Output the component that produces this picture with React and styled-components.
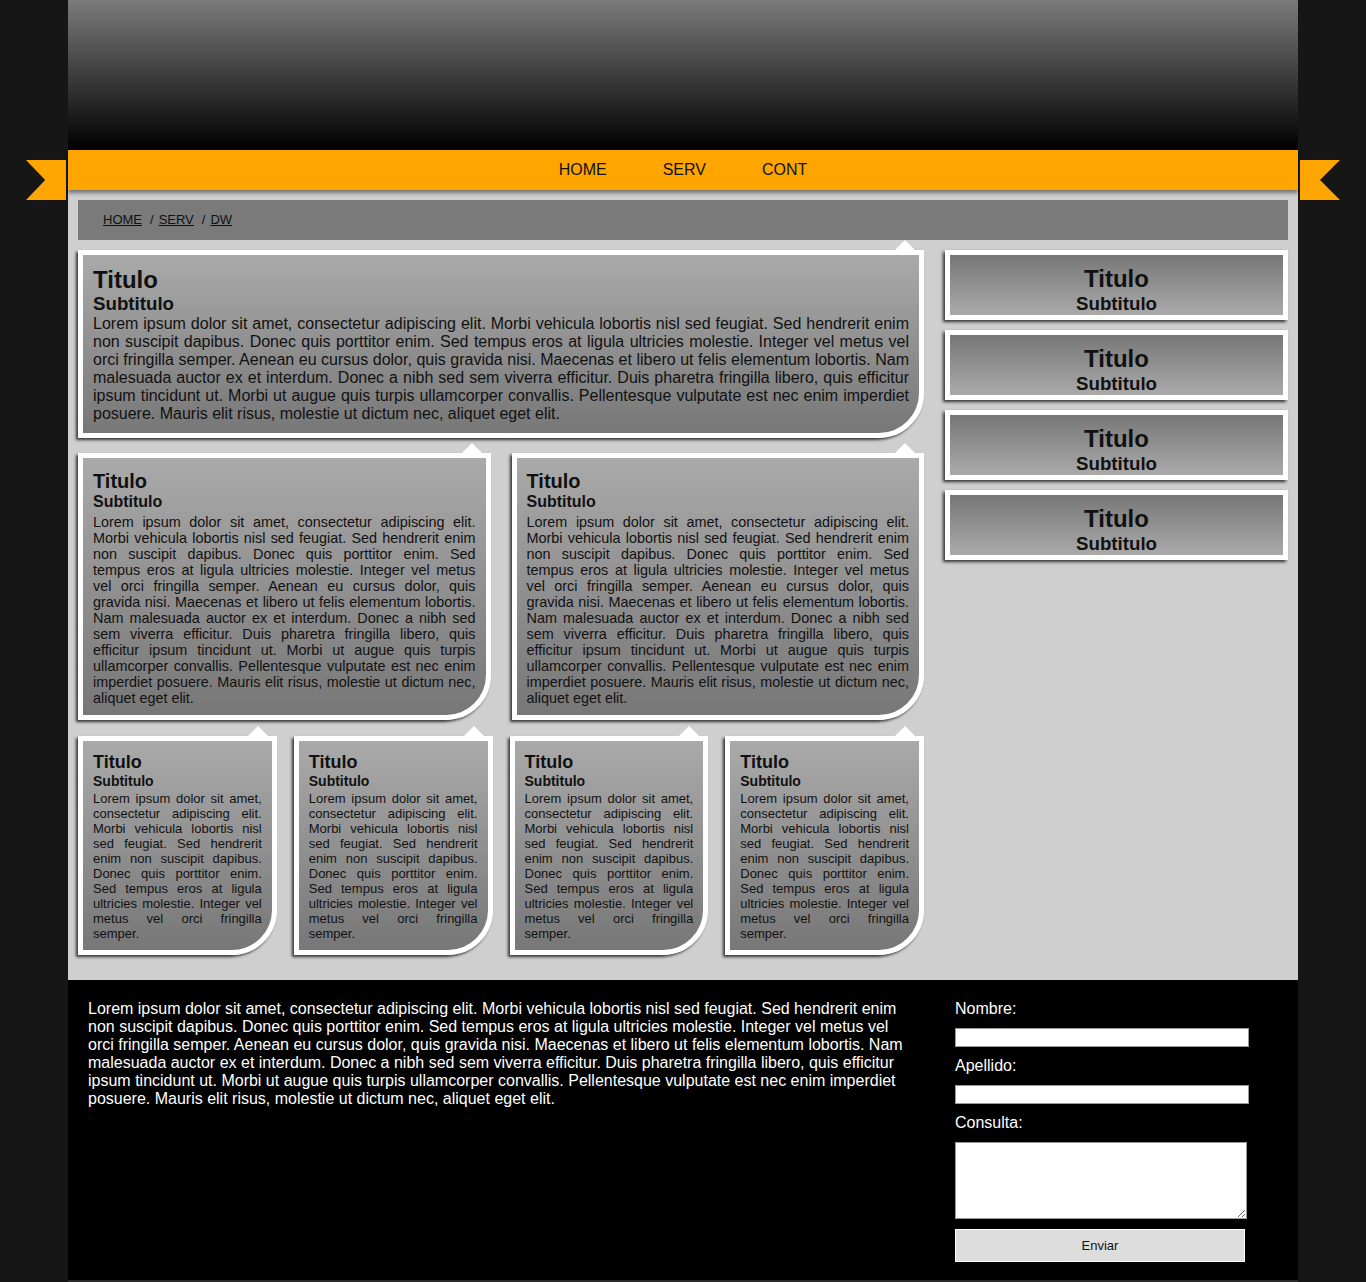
import React from 'react';
import styled, { createGlobalStyle } from 'styled-components';

const GlobalStyle = createGlobalStyle`
body{
margin:0;
background-color:#161616;
font-family:"Liberation Sans", Arial, sans-serif;
}
`;

const LOREM = 'Lorem ipsum dolor sit amet, consectetur adipiscing elit. Morbi vehicula lobortis nisl sed feugiat. Sed hendrerit enim non suscipit dapibus. Donec quis porttitor enim. Sed tempus eros at ligula ultricies molestie. Integer vel metus vel orci fringilla semper. Aenean eu cursus dolor, quis gravida nisi. Maecenas et libero ut felis elementum lobortis. Nam malesuada auctor ex et interdum. Donec a nibh sed sem viverra efficitur. Duis pharetra fringilla libero, quis efficitur ipsum tincidunt ut. Morbi ut augue quis turpis ullamcorper convallis. Pellentesque vulputate est nec enim imperdiet posuere. Mauris elit risus, molestie ut dictum nec, aliquet eget elit.';
const SHORT = 'Lorem ipsum dolor sit amet, consectetur adipiscing elit. Morbi vehicula lobortis nisl sed feugiat. Sed hendrerit enim non suscipit dapibus. Donec quis porttitor enim. Sed tempus eros at ligula ultricies molestie. Integer vel metus vel orci fringilla semper.';

// sizes for the three kinds of article box
const sizes = {
  lg: { pad: '11px 10px 10px', t: 24, tl: 27, s: 18.72, sl: 21, sm: 1, p: 16, pl: 18 },
  md: { pad: '12px 10px 9px', t: 20, tl: 23, s: 16, sl: 18, sm: 3, p: 14.4, pl: 16 },
  sm: { pad: '11px 10px 9px', t: 18, tl: 21, s: 14, sl: 16, sm: 2, p: 13, pl: 15 },
};

const Wrapper = styled.div`
width:1230px;
margin:0 auto;
`;

const Header = styled.header`
height:150px;
background:linear-gradient(to bottom,#7b7b7b,#000);
`;

const Nav = styled.nav`
position:relative;
height:40px;
background-color:#ffa500;
box-shadow:0 3px 4px rgba(0,0,0,0.45);
z-index:2;
`;

const Ribbon = styled.span`
position:absolute;
top:10px;
width:40px;
height:40px;
background-color:#ffa500;
${(p) => p.$side === 'left'
    ? 'left:-42px; clip-path:polygon(0 0,100% 0,100% 100%,0 100%,48% 50%);'
    : 'right:-42px; clip-path:polygon(0 0,100% 0,50% 50%,100% 100%,0 100%);'}
`;

const Menu = styled.ul`
list-style:none;
margin:0;
padding:0;
display:flex;
justify-content:center;
gap:56px;
`;

const MenuLink = styled.a`
display:block;
line-height:40px;
font-size:16px;
color:#111;
text-decoration:none;
`;

const Content = styled.main`
background-color:#cfcfcf;
padding:10px 10px 25px;
`;

const Crumbs = styled.div`
height:40px;
line-height:40px;
background-color:#7a7a7a;
padding-left:25px;
font-size:13px;
color:#111;
`;

const Crumb = styled.a`
color:#111;
text-decoration:underline;
`;

const Sep = styled.span`
margin:0 5px 0 8px;
`;

const Layout = styled.div`
display:grid;
grid-template-columns:846px 343px;
column-gap:21px;
margin-top:10px;
align-items:start;
`;

const Column = styled.div`
display:flex;
flex-direction:column;
gap:15px;
`;

const Row = styled.div`
display:grid;
grid-template-columns:repeat(${(p) => p.$cols},1fr);
column-gap:${(p) => p.$gap}px;
margin-top:${(p) => p.$top || 0}px;
`;

const Box = styled.article`
position:relative;
border:5px solid #fff;
border-bottom-right-radius:45px;
padding:${(p) => sizes[p.$size].pad};
background:linear-gradient(to bottom,#aaa,#777);
box-shadow:-2px 2px 3px rgba(0,0,0,0.75);
color:#111;

&::before{
content:'';
position:absolute;
top:-15px;
right:4px;
width:0;
height:0;
border-left:10px solid transparent;
border-right:10px solid transparent;
border-bottom:10px solid #fff;
}
`;

const Title = styled.h2`
margin:0;
font-size:${(p) => sizes[p.$size].t}px;
line-height:${(p) => sizes[p.$size].tl}px;
font-weight:bold;
`;

const Subtitle = styled.h3`
margin:0 0 ${(p) => sizes[p.$size].sm}px;
font-size:${(p) => sizes[p.$size].s}px;
line-height:${(p) => sizes[p.$size].sl}px;
font-weight:bold;
`;

const Text = styled.p`
margin:0;
font-size:${(p) => sizes[p.$size].p}px;
line-height:${(p) => sizes[p.$size].pl}px;
text-align:justify;
`;

const Sidebar = styled.aside`
display:flex;
flex-direction:column;
gap:10px;
`;

const SideBox = styled.div`
box-sizing:border-box;
height:70px;
padding-top:10px;
border:5px solid #fff;
background:linear-gradient(to bottom,#777,#aaa);
box-shadow:-2px 2px 3px rgba(0,0,0,0.75);
text-align:center;
color:#111;
`;

const SideTitle = styled.h2`
margin:0;
font-size:24px;
line-height:28px;
`;

const SideSub = styled.h3`
margin:0;
font-size:18.72px;
line-height:21px;
`;

const Footer = styled.footer`
display:grid;
grid-template-columns:816px 294px;
column-gap:51px;
padding:20px 20px 18px;
background-color:#000;
border-bottom:2px solid #2b2b2b;
color:#fff;
`;

const FooterText = styled.p`
margin:0;
font-size:16px;
line-height:18px;
`;

const Form = styled.form`
display:flex;
flex-direction:column;
align-items:flex-start;
`;

const Label = styled.label`
font-size:16px;
line-height:18px;
margin-bottom:10px;
`;

const Input = styled.input`
box-sizing:border-box;
width:294px;
height:19px;
margin:0 0 10px;
border:1px solid #999;
background:#fff;
`;

const Area = styled.textarea`
box-sizing:border-box;
width:292px;
height:77px;
margin:0 0 10px;
border:1px solid #999;
background:#fff;
`;

const Button = styled.button`
box-sizing:border-box;
width:290px;
height:33px;
border:1px solid #fff;
background-color:#ddd;
color:#111;
font-family:"Liberation Sans", Arial, sans-serif;
font-size:13px;
`;

const Article = ({ size, text }) => (
  <Box $size={size}>
    <Title $size={size}>Titulo</Title>
    <Subtitle $size={size}>Subtitulo</Subtitle>
    <Text $size={size}>{text}</Text>
  </Box>
);

const App = () => {
  return (
    <Wrapper>
      <GlobalStyle />
      <Header />
      <Nav>
        <Ribbon $side="left" />
        <Menu>
          <li><MenuLink href="#">HOME</MenuLink></li>
          <li><MenuLink href="#">SERV</MenuLink></li>
          <li><MenuLink href="#">CONT</MenuLink></li>
        </Menu>
        <Ribbon $side="right" />
      </Nav>
      <Content>
        <Crumbs>
          <Crumb href="#">HOME</Crumb>
          <Sep>/</Sep>
          <Crumb href="#">SERV</Crumb>
          <Sep>/</Sep>
          <Crumb href="#">DW</Crumb>
        </Crumbs>
        <Layout>
          <Column>
            <Article size="lg" text={LOREM} />
            <Row $cols={2} $gap={21}>
              <Article size="md" text={LOREM} />
              <Article size="md" text={LOREM} />
            </Row>
            <Row $cols={4} $gap={17} $top={1}>
              <Article size="sm" text={SHORT} />
              <Article size="sm" text={SHORT} />
              <Article size="sm" text={SHORT} />
              <Article size="sm" text={SHORT} />
            </Row>
          </Column>
          <Sidebar>
            {[1, 2, 3, 4].map((n) => (
              <SideBox key={n}>
                <SideTitle>Titulo</SideTitle>
                <SideSub>Subtitulo</SideSub>
              </SideBox>
            ))}
          </Sidebar>
        </Layout>
      </Content>
      <Footer>
        <FooterText>{LOREM}</FooterText>
        <Form onSubmit={(e) => e.preventDefault()}>
          <Label htmlFor="nombre">Nombre:</Label>
          <Input id="nombre" type="text" />
          <Label htmlFor="apellido">Apellido:</Label>
          <Input id="apellido" type="text" />
          <Label htmlFor="consulta">Consulta:</Label>
          <Area id="consulta" />
          <Button type="submit">Enviar</Button>
        </Form>
      </Footer>
    </Wrapper>
  )
}

export default App
